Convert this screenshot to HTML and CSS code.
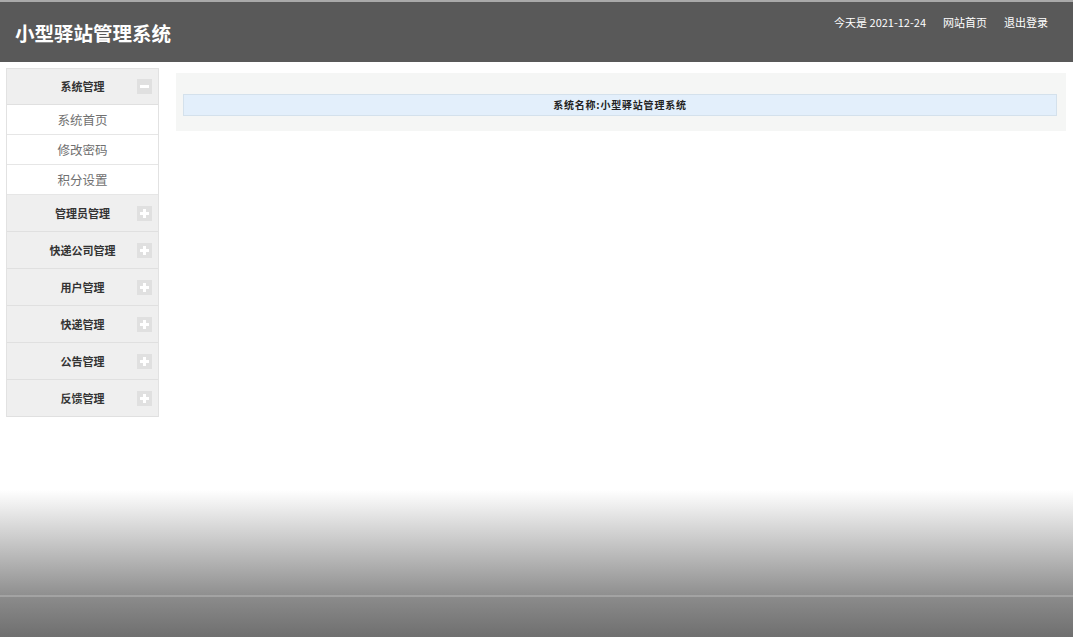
FILE: index.html
```html
<!DOCTYPE html>
<html>
<head>
    <meta charset="utf-8">
    <title>小型驿站管理系统</title>
    <link rel="stylesheet" href="styles.css">
</head>
<body>
    <div class="top">
        <div class="logo">小型驿站管理系统</div>
        <div class="top-links">
            <span>今天是 2021-12-24</span>
            <a href="#">网站首页</a>
            <a href="#">退出登录</a>
        </div>
    </div>
    <div class="main">
        <div class="left-menu">
            <div class="menu-group open">
                <div class="menu-title">系统管理<span class="toggle minus"></span></div>
                <a class="menu-item" href="#">系统首页</a>
                <a class="menu-item" href="#">修改密码</a>
                <a class="menu-item" href="#">积分设置</a>
            </div>
            <div class="menu-group">
                <div class="menu-title">管理员管理<span class="toggle plus"></span></div>
            </div>
            <div class="menu-group">
                <div class="menu-title">快递公司管理<span class="toggle plus"></span></div>
            </div>
            <div class="menu-group">
                <div class="menu-title">用户管理<span class="toggle plus"></span></div>
            </div>
            <div class="menu-group">
                <div class="menu-title">快递管理<span class="toggle plus"></span></div>
            </div>
            <div class="menu-group">
                <div class="menu-title">公告管理<span class="toggle plus"></span></div>
            </div>
            <div class="menu-group">
                <div class="menu-title">反馈管理<span class="toggle plus"></span></div>
            </div>
        </div>
        <div class="content">
            <div class="info-box">系统名称:小型驿站管理系统</div>
        </div>
    </div>
</body>
</html>
```

FILE: styles.css
```css
html, body {
    margin: 0;
    padding: 0;
}
body {
    height: 100vh;
    font-family: "Noto Sans CJK SC", "Liberation Sans", sans-serif;
    background: linear-gradient(to bottom,
        #ffffff 0, #ffffff 490px,
        #8f8f8f 595px, #a3a3a3 595px, #a3a3a3 597px,
        #8b8b8b 597px, #6f6f6f 637px);
    background-repeat: no-repeat;
}
a {
    text-decoration: none;
}
.top {
    height: 60px;
    background-color: #595959;
    border-top: 2px solid #a9a9a9;
    display: flex;
    justify-content: space-between;
    align-items: flex-start;
}
.logo {
    color: #fff;
    font-size: 19.5px;
    font-weight: bold;
    padding: 17px 0 0 15px;
    line-height: 28px;
}
.top-links {
    color: #fff;
    font-size: 11px;
    padding: 11px 25px 0 0;
    line-height: 18px;
    display: flex;
    gap: 17px;
}
.top-links a {
    color: #fff;
}
.main {
    display: flex;
    align-items: flex-start;
    gap: 17px;
    padding: 6px 7px 0 6px;
}
.left-menu {
    width: 151px;
    flex-shrink: 0;
    border: 1px solid #e2e2e2;
    border-bottom: none;
    background-color: #efefef;
}
.menu-title {
    position: relative;
    height: 36px;
    line-height: 36px;
    text-align: center;
    font-size: 11px;
    font-weight: bold;
    color: #333;
    border-bottom: 1px solid #e0e0e0;
}
.menu-group.open .menu-title {
    height: 35px;
    line-height: 35px;
}
.toggle {
    position: absolute;
    right: 6px;
    top: 11px;
    width: 15px;
    height: 15px;
    background-color: #e0e0e0;
}
.open .toggle {
    top: 10px;
}
.toggle::before, .toggle::after {
    content: "";
    position: absolute;
    background-color: #fff;
}
.toggle::before {
    left: 3px;
    top: 6px;
    width: 9px;
    height: 3px;
}
.plus::after {
    left: 6px;
    top: 3px;
    width: 3px;
    height: 9px;
}
.menu-item {
    display: block;
    height: 29px;
    line-height: 29px;
    text-align: center;
    font-size: 12.5px;
    color: #707070;
    background-color: #fff;
    border-bottom: 1px solid #e6e6e6;
}
.content {
    flex: 1;
    margin-top: 5px;
    background-color: #f5f6f5;
    padding: 21px 9px 15px 7px;
}
.info-box {
    height: 20px;
    line-height: 20px;
    background-color: #e3effb;
    border: 1px solid #d4e1ec;
    text-align: center;
    font-size: 10px;
    font-weight: bold;
    color: #222;
    letter-spacing: 0.8px;
}
```
